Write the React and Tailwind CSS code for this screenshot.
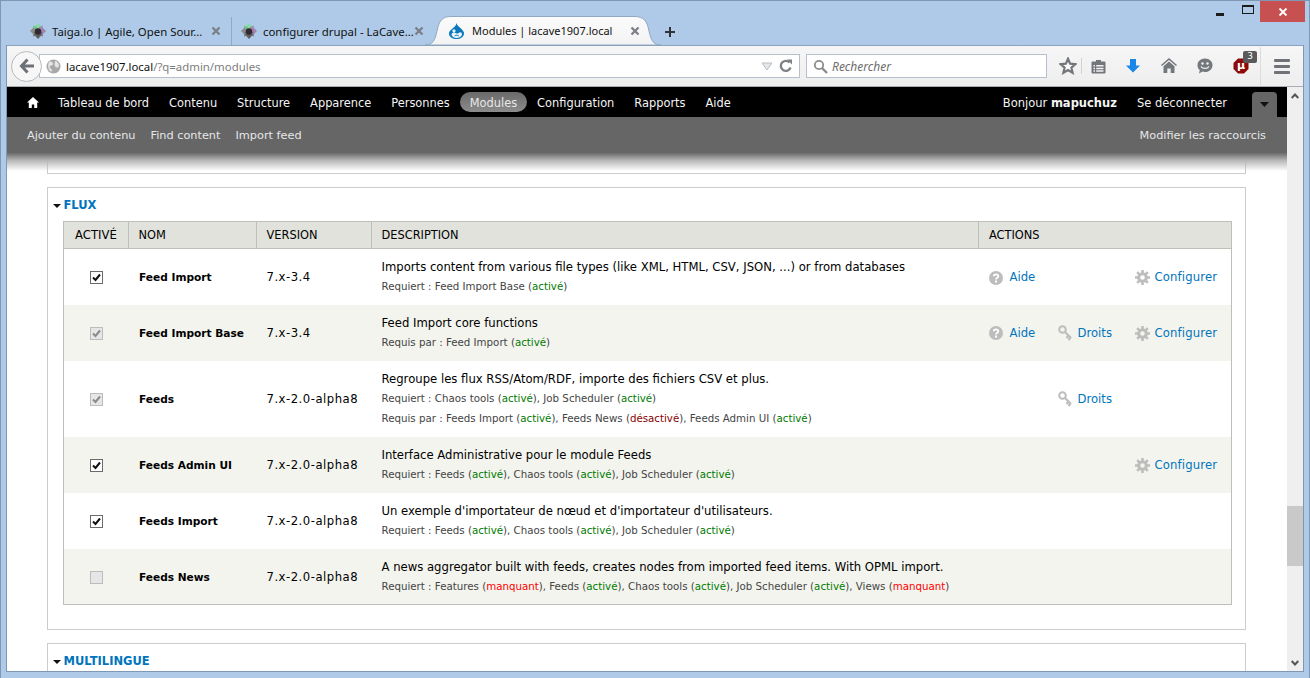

import React from "react";

const dj = "font-['DejaVu_Sans',sans-serif]";
const ui = "font-['Noto_Sans',sans-serif]";

function Taiga() {
  return (
    <svg width="16" height="16" viewBox="0 0 16 16" className="shrink-0">
      <path d="M8 0 11.500 3.500 8 8 4.500 3.500Z" fill="#86dca8" />
      <path d="M3 2.500 7 4 8 8 4 7Z" fill="#6fc383" />
      <path d="M13 2.500 9 4 8 8 12 7Z" fill="#9c8db0" />
      <path d="M16 8 12.500 4.500 8 8 12.500 11.500Z" fill="#a282aa" />
      <path d="M0 8 3.500 4.500 8 8 3.500 11.500Z" fill="#8b8b8b" />
      <path d="M3 13.500 7 12 8 8 4 9Z" fill="#6c6c6c" />
      <path d="M13 13.500 9 12 8 8 12 9Z" fill="#7c6487" />
      <path d="M8 16 4.800 12.500 8 8 11.200 12.500Z" fill="#5f5f5f" />
      <circle cx="8" cy="8.500" r="3.200" fill="#2e2a33" />
    </svg>
  );
}

function Drop() {
  return (
    <svg width="15" height="16" viewBox="0 0 15 16" className="shrink-0">
      <path d="M7.500 0C8 2.500 10 3.500 12 5.500 14 7.500 15 9 15 10.500 15 14 11.500 16 7.500 16S0 14 0 10.500C0 8.500 1.500 7 3.500 5.500 5.500 4 7 2.500 7.500 0Z" fill="#0a78bd" />
      <path d="M2.500 11.500C3 9.500 5 9 6.500 10 8 11 9.500 10.500 10.500 9.500 11.800 8.800 13 9.800 13 11.500 12.500 13.500 10.500 15 7.500 15S3 13.500 2.500 11.500Z" fill="#e8f2f9" />
      <circle cx="5" cy="7.800" r="1.600" fill="#e8f2f9" />
      <path d="M5.500 13C7 12 8.500 12 9.800 13" stroke="#0a78bd" strokeWidth="1" fill="none" />
    </svg>
  );
}

function Close() {
  return (
    <svg width="10" height="10" viewBox="0 0 10 10" className="shrink-0">
      <path d="M1.500 1.500 8.500 8.500M8.500 1.500 1.500 8.500" stroke="#7b7f86" strokeWidth="2.300" />
    </svg>
  );
}

function InactiveTab({ w, title, border }) {
  return (
    <div className={`flex h-[28px] items-center pr-[10px] ${w} ${border}`}>
      <Taiga />
      <span className={`${ui} ml-[6px] flex-1 whitespace-nowrap pt-[2px] text-[11.4px] text-[#111]`}>{title}</span>
      <Close />
    </div>
  );
}

function ActiveTab() {
  return (
    <div className="relative -ml-[3px] flex h-[29px] w-[236px] items-center pl-[24px] pr-[21px]">
      <svg width="236" height="29" viewBox="0 0 236 29" className="absolute left-0 top-0">
        <defs>
          <linearGradient id="tabfill" x1="0" y1="0" x2="0" y2="1">
            <stop offset="0" stopColor="#fbfbfb" />
            <stop offset="1" stopColor="#f3f3f3" />
          </linearGradient>
        </defs>
        <path d="M0 29C8 29 10 24 12 15 14 5 17 .5 26 .5H209C219 .5 222 5 224 15 226 24 228 29 236 29Z" fill="url(#tabfill)" stroke="#8fa8c4" strokeWidth="1" />
      </svg>
      <span className="relative"><Drop /></span>
      <span className={`${ui} relative ml-[8px] flex-1 whitespace-nowrap pt-[2px] text-[11px] text-[#111]`}>Modules | lacave1907.local</span>
      <span className="relative"><Close /></span>
    </div>
  );
}

function WindowControls() {
  return (
    <div className="absolute right-[4px] top-0 flex h-[21px] items-stretch">
      <div className="flex w-[32px] items-center justify-center"><span className="mt-[6px] h-[3px] w-[8px] bg-[#1c1c1c]" /></div>
      <div className="flex w-[24px] items-center justify-center"><span className="-mt-[5px] h-[9px] w-[12px] border border-t-2 border-[#1c1c1c]" /></div>
      <div className="flex w-[45px] items-center justify-center bg-[#c75050]">
        <svg width="10" height="10" viewBox="0 0 10 10"><path d="M1.500 1.500 8.500 8.500M8.500 1.500 1.500 8.500" stroke="#fff" strokeWidth="1.800" /></svg>
      </div>
    </div>
  );
}

function BackButton() {
  return (
    <div className="z-10 flex h-[31px] w-[31px] shrink-0 items-center justify-center rounded-full border border-[#b6babf] bg-[#f7f7f7]">
      <svg width="16" height="16" viewBox="0 0 16 16">
        <path d="M8.500 1.500 2.500 8 8.500 14.500M3 8H15" fill="none" stroke="#6c7176" strokeWidth="3" />
      </svg>
    </div>
  );
}

function Toolbar() {
  return (
    <div className="flex h-[42px] shrink-0 items-center border-y border-t-[#8ca3bc] border-b-[#a9adb1] bg-linear-to-b from-[#f6f6f6] to-[#eeeeee] pl-[4px]">
      <BackButton />
      <div className="-ml-[3px] flex h-[24px] w-[761px] items-center border border-[#b6c0cb] bg-white pl-[6px] pr-[6px]">
        <svg width="15" height="15" viewBox="0 0 15 15" className="shrink-0">
          <circle cx="7.500" cy="7.500" r="7" fill="#a8a8a8" />
          <path d="M3 3C5 2 7 3 7 5S5 6 4 7 5 10 6 11 5 13 4 12 1 7 3 3ZM9 2C11 2 13 4 13 7 12 9 10 9 9 7S9 5 9 2Z" fill="#e4e4e4" />
        </svg>
        <span className={`${ui} ml-[5px] flex-1 pt-[2px] text-[11.4px]`}>
          <span className="text-[#111]">lacave1907.local</span>
          <span className="text-[#7c7c7c]">/?q=admin/modules</span>
        </span>
        <svg width="12" height="9" viewBox="0 0 12 9" className="mr-[6px]"><path d="M1 1H11L6 8Z" fill="#e4e7ea" stroke="#b9bec3" /></svg>
        <svg width="14" height="14" viewBox="0 0 14 14">
          <path d="M11.500 8.500A5 5 0 1 1 10.500 3.500" fill="none" stroke="#7d8287" strokeWidth="2.400" />
          <path d="M8 .5H13V5.500Z" fill="#7d8287" />
        </svg>
      </div>
      <div className="ml-[6px] flex h-[24px] w-[241px] items-center border border-[#b6c0cb] bg-white pl-[6px]">
        <svg width="15" height="15" viewBox="0 0 15 15">
          <circle cx="6" cy="6" r="4.200" fill="none" stroke="#8b8b8b" strokeWidth="1.800" />
          <path d="M9 9 14 14" stroke="#8b8b8b" strokeWidth="2.400" />
        </svg>
        <span className={`${ui} ml-[4px] pt-[2px] text-[12px] italic text-[#6d6d6d]`}>Rechercher</span>
      </div>
      <div className="ml-[12px] flex items-center">
        <svg width="18" height="18" viewBox="0 0 18 18">
          <path d="M9 1.800 11.100 6.700 16.300 7.200 12.400 10.600 13.600 15.800 9 13.100 4.400 15.800 5.600 10.600 1.700 7.200 6.900 6.700Z" fill="#fafafa" stroke="#72767b" strokeWidth="2.200" />
        </svg>
        <span className="ml-[4px] h-[16px] w-px bg-[#d2d2d2]" />
        <svg width="15" height="15" viewBox="0 0 15 15" className="ml-[9px]">
          <path d="M1.500 2.500H5V1H10V2.500H13.500A1 1 0 0 1 14.500 3.500V13.500A1 1 0 0 1 13.500 14.500H1.500A1 1 0 0 1 .5 13.500V3.500A1 1 0 0 1 1.500 2.500Z" fill="#72767b" />
          <path d="M2.500 6H4V7.500H2.500ZM2.500 8.800H4V10.300H2.500ZM2.500 11.300H4V12.800H2.500ZM5.200 6H12.500V7.500H5.200ZM5.200 8.800H12.500V10.300H5.200ZM5.200 11.300H12.500V12.800H5.200Z" fill="#f2f2f2" />
        </svg>
        <svg width="16" height="16" viewBox="0 0 16 16" className="ml-[19px]">
          <path d="M5 1H11V7.500H15L8 14.500 1 7.500H5Z" fill="#1a86e8" />
        </svg>
        <svg width="16" height="16" viewBox="0 0 16 16" className="ml-[20px]">
          <path d="M8 0 0 7 1 8 8 2 15 8 16 7Z" fill="#74787d" />
          <path d="M8 3.500 2.500 8.200V15H6.300V10.500H9.700V15H13.500V8.200Z" fill="#74787d" />
        </svg>
        <svg width="16" height="16" viewBox="0 0 16 16" className="ml-[20px]">
          <path d="M8 .5C12.500 .5 15.500 3.500 15.500 7.200S12.500 14 8 14C7 14 6 13.800 5.500 13.600L2 15.500 2.800 12C1.300 11 .5 9.200 .5 7.200.5 3.500 3.500 .5 8 .5Z" fill="#74787d" />
          <circle cx="5.500" cy="5.500" r="1.200" fill="#f2f2f2" />
          <circle cx="10.500" cy="5.500" r="1.200" fill="#f2f2f2" />
          <path d="M4 8.500C5.500 11 10.500 11 12 8.500" fill="none" stroke="#f2f2f2" strokeWidth="1.300" />
        </svg>
        <div className="relative ml-[20px] h-[16px] w-[16px]">
          <svg width="16" height="16" viewBox="0 0 16 16">
            <path d="M5 .5H11L15.500 5V11L11 15.500H5L.5 11V5Z" fill="#8c0a0a" />
          </svg>
          <span className={`${dj} absolute left-[4px] top-[0px] text-[11px] font-bold leading-[16px] text-white`}>μ</span>
          <span className={`${dj} absolute -top-[7px] left-[10px] flex h-[12px] w-[14px] items-center justify-center rounded-[2px] bg-[#5a5a5a] text-[9px] text-white`}>3</span>
        </div>
        <span className="ml-[11px] h-[38px] w-px bg-[#dcdcdc]" />
        <div className="ml-[13px] flex flex-col gap-[3px]">
          <span className="h-[3px] w-[16px] rounded-[1px] bg-[#6f7378]" />
          <span className="h-[3px] w-[16px] rounded-[1px] bg-[#6f7378]" />
          <span className="h-[3px] w-[16px] rounded-[1px] bg-[#6f7378]" />
        </div>
      </div>
    </div>
  );
}

function AdminBar() {
  const items = [
    ["Tableau de bord", false],
    ["Contenu", false],
    ["Structure", false],
    ["Apparence", false],
    ["Personnes", false],
    ["Modules", true],
    ["Configuration", false],
    ["Rapports", false],
    ["Aide", false],
  ];
  return (
    <div className={`${dj} shrink-0 text-[#f4f4f4]`}>
      <div className="flex h-[30px] items-center bg-black pl-[20px] text-[11.4px]">
        <svg width="12" height="11" viewBox="0 0 12 11" className="mr-[19px] shrink-0">
          <path d="M6 0 0 5.500H1.800V11H4.800V7.500H7.200V11H10.200V5.500H12Z" fill="#fff" />
        </svg>
        <div className="flex items-center gap-[20px]">
          {items.map(([t, a]) =>
            a ? (
              <span key={t} className="-mx-[10px] flex h-[20px] items-center rounded-[10px] bg-linear-to-b from-[#6a6a6a] to-[#8c8c8c] px-[10px] pt-[3px] text-[#e8e8e8]">{t}</span>
            ) : (
              <span key={t} className="whitespace-nowrap pt-[4px]">{t}</span>
            )
          )}
        </div>
        <div className="ml-auto flex h-full items-center text-[11.5px]">
          <span className="pt-[4px]">Bonjour <b>mapuchuz</b></span>
          <span className="ml-[20px] pt-[4px]">Se déconnecter</span>
          <div className="ml-[25px] mr-[10px] flex h-[25px] w-[25px] items-center justify-center self-end rounded-t-[4px] bg-[#666]">
            <svg width="9" height="5" viewBox="0 0 9 5"><path d="M0 0H9L4.500 5Z" fill="#111" /></svg>
          </div>
        </div>
      </div>
      <div className="flex h-[36px] items-center gap-[15px] bg-[#666] pl-[20px] pr-[21px] pt-[2px] text-[11.3px] text-[#e6e6e6]">
        <span>Ajouter du contenu</span>
        <span>Find content</span>
        <span>Import feed</span>
        <span className="ml-auto">Modifier les raccourcis</span>
      </div>
    </div>
  );
}

const A = () => <span className="text-[#007a00]">activé</span>;
const M = () => <span className="text-[#ff0000]">manquant</span>;
const D = () => <span className="text-[#880000]">désactivé</span>;

function Check({ state }) {
  if (state === "on")
    return (
      <span className="inline-flex h-[13px] w-[13px] items-center justify-center border border-[#6a6a6a] bg-white align-middle">
        <svg width="9" height="9" viewBox="0 0 9 9"><path d="M1 4.500 3.500 7 8 1.500" fill="none" stroke="#111" strokeWidth="2" /></svg>
      </span>
    );
  if (state === "dis")
    return (
      <span className="inline-flex h-[13px] w-[13px] items-center justify-center border border-[#bcbcbc] bg-[#e6e6e6] align-middle">
        <svg width="9" height="9" viewBox="0 0 9 9"><path d="M1 4.500 3.500 7 8 1.500" fill="none" stroke="#8a8a8a" strokeWidth="2" /></svg>
      </span>
    );
  return <span className="inline-block h-[13px] w-[13px] border border-[#bcbcbc] bg-[#e6e6e6] align-middle" />;
}

function QIcon() {
  return (
    <svg width="14" height="14" viewBox="0 0 14 14" className="shrink-0">
      <circle cx="7" cy="7" r="7" fill="#bdbdbd" />
      <path d="M4.800 5.300C4.800 2.800 9.300 2.800 9.300 5.200 9.300 6.800 7 6.800 7 8.500" fill="none" stroke="#fff" strokeWidth="1.800" />
      <rect x="6" y="9.500" width="2" height="2" fill="#fff" />
    </svg>
  );
}
function KeyIcon() {
  return (
    <svg width="15" height="16" viewBox="0 0 15 16" className="shrink-0">
      <circle cx="4.500" cy="4.500" r="3.300" fill="none" stroke="#bdbdbd" strokeWidth="2" />
      <path d="M7 7 13 13M10.500 10.500 8.500 13M12.500 12.500 10.500 15" fill="none" stroke="#bdbdbd" strokeWidth="2.200" />
    </svg>
  );
}
function GearIcon() {
  return (
    <svg width="15" height="15" viewBox="0 0 15 15" className="shrink-0">
      <circle cx="7.500" cy="7.500" r="3.800" fill="none" stroke="#bdbdbd" strokeWidth="3" />
      <g stroke="#bdbdbd" strokeWidth="2.600">
        <path d="M7.500 0V3M7.500 12V15M0 7.500H3M12 7.500H15M2.200 2.200 4.300 4.300M10.700 10.700 12.800 12.800M12.800 2.200 10.700 4.300M4.300 10.700 2.200 12.800" />
      </g>
    </svg>
  );
}

function Actions({ a, d, c }) {
  return (
    <div className="grid grid-cols-[69px_77px_1fr] items-center text-[#0074bd]">
      <span>{a && <span className="flex items-center gap-[7px]"><QIcon />Aide</span>}</span>
      <span>{d && <span className="flex items-center gap-[5px]"><KeyIcon />Droits</span>}</span>
      <span>{c && <span className="flex items-center gap-[5px] tracking-[0.15px]"><GearIcon />Configurer</span>}</span>
    </div>
  );
}

const rows = [
  {
    chk: "on", name: "Feed Import", ver: "7.x-3.4", h: "h-[56px]",
    desc: "Imports content from various file types (like XML, HTML, CSV, JSON, ...) or from databases",
    sub: [<>Requiert : Feed Import Base (<A />)</>],
    a: true, c: true,
  },
  {
    chk: "dis", name: "Feed Import Base", ver: "7.x-3.4", h: "h-[56px]",
    desc: "Feed Import core functions",
    sub: [<>Requis par : Feed Import (<A />)</>],
    a: true, d: true, c: true,
  },
  {
    chk: "dis", name: "Feeds", ver: "7.x-2.0-alpha8", h: "h-[76px]",
    desc: "Regroupe les flux RSS/Atom/RDF, importe des fichiers CSV et plus.",
    sub: [
      <>Requiert : Chaos tools (<A />), Job Scheduler (<A />)</>,
      <>Requis par : Feeds Import (<A />), Feeds News (<D />), Feeds Admin UI (<A />)</>,
    ],
    d: true,
  },
  {
    chk: "on", name: "Feeds Admin UI", ver: "7.x-2.0-alpha8", h: "h-[56px]",
    desc: "Interface Administrative pour le module Feeds",
    sub: [<>Requiert : Feeds (<A />), Chaos tools (<A />), Job Scheduler (<A />)</>],
    c: true,
  },
  {
    chk: "on", name: "Feeds Import", ver: "7.x-2.0-alpha8", h: "h-[56px]",
    desc: "Un exemple d'importateur de nœud et d'importateur d'utilisateurs.",
    sub: [<>Requiert : Feeds (<A />), Chaos tools (<A />), Job Scheduler (<A />)</>],
  },
  {
    chk: "off", name: "Feeds News", ver: "7.x-2.0-alpha8", h: "h-[56px]",
    desc: "A news aggregator built with feeds, creates nodes from imported feed items. With OPML import.",
    sub: [<>Requiert : Features (<M />), Feeds (<A />), Chaos tools (<A />), Job Scheduler (<A />), Views (<M />)</>],
  },
];

function ModuleTable() {
  const th = "border-r border-[#bebfb9] pl-[9.5px] pt-[2px] text-left text-[11.4px] font-normal";
  return (
    <table className="w-[1169px] table-fixed border-collapse border border-[#bebfb9] text-[11.65px] text-black">
      <colgroup>
        <col className="w-[65px]" />
        <col className="w-[128px]" />
        <col className="w-[115px]" />
        <col className="w-[607px]" />
        <col />
      </colgroup>
      <thead>
        <tr className="h-[27px] border-b border-[#bebfb9] bg-[#e1e2dc]">
          <th className="border-r border-[#bebfb9] pl-[11px] pt-[2px] text-left font-normal">ACTIVÉ</th>
          <th className={th}>NOM</th>
          <th className={th}>VERSION</th>
          <th className={th}>DESCRIPTION</th>
          <th className="pl-[10px] pt-[2px] text-left text-[11.4px] font-normal">ACTIONS</th>
        </tr>
      </thead>
      <tbody>
        {rows.map((r, i) => (
          <tr key={r.name} className={`${r.h} ${i % 2 ? "bg-[#f3f4ee]" : "bg-white"}`}>
            <td className="pt-[2px] text-center"><Check state={r.chk} /></td>
            <td className="whitespace-nowrap pl-[10.5px] pt-[3px] text-[10.6px] font-bold">{r.name}</td>
            <td className="whitespace-nowrap pl-[10px] pt-[2px] tracking-[0.5px]">{r.ver}</td>
            <td className="px-[10px] pt-[2px]">
              <div className="-mt-[2px] leading-[18px]">{r.desc}</div>
              {r.sub.map((s, j) => (
                <div key={j} className={`text-[10.25px] leading-[18px] text-[#444] ${j === 0 ? "mt-[1px]" : "mt-[2px]"}`}>{s}</div>
              ))}
            </td>
            <td className="pl-[10px] pr-[13px] pt-[2px]">
              <Actions a={r.a} d={r.d} c={r.c} />
            </td>
          </tr>
        ))}
      </tbody>
    </table>
  );
}

function Legend({ children }) {
  return (
    <div className="flex h-[33px] items-center gap-[2.500px] pl-[5px] pt-[2px]">
      <svg width="8" height="4" viewBox="0 0 8 4"><path d="M0 0H8L4 4Z" fill="#111" /></svg>
      <span className="text-[11.5px] font-bold text-[#0074bd]">{children}</span>
    </div>
  );
}

function Scrollbar() {
  return (
    <div className="flex w-[16px] shrink-0 flex-col items-center bg-[#efefef]">
      <svg width="8" height="6" viewBox="0 0 8 6" className="mt-[6px]"><path d="M.7 5 4 1.500 7.300 5" fill="none" stroke="#555" strokeWidth="2" /></svg>
      <div className="mt-[407px] h-[60px] w-full bg-[#c9c9c9]" />
      <svg width="8" height="6" viewBox="0 0 8 6" className="mt-[94px]"><path d="M.7 1 4 4.500 7.300 1" fill="none" stroke="#555" strokeWidth="2" /></svg>
    </div>
  );
}

function Content() {
  return (
    <div className={`${dj} relative min-h-0 flex-1 overflow-hidden bg-white px-[40px]`}>
      <div className="h-[21px] w-[1199px] border-x border-b border-[#cccccc]" />
      <div className="mt-[13px] h-[443px] w-[1199px] border border-[#cccccc]">
        <Legend>FLUX</Legend>
        <div className="pl-[15px]"><ModuleTable /></div>
      </div>
      <div className="mt-[13px] h-[60px] w-[1199px] border border-[#cccccc]">
        <Legend>MULTILINGUE</Legend>
      </div>
      <div className="absolute inset-x-0 top-0 h-[18px] bg-linear-to-b from-[#6c6c6c] via-[#b5b5b5] via-40% to-transparent" />
    </div>
  );
}

export default function App() {
  return (
    <div className="relative flex h-[678px] w-[1310px] flex-col overflow-hidden border border-b-0 border-[#7f97b3] bg-[#aecae8] pb-[6px] pl-[5px] pr-[5px]">
      <WindowControls />
      <div className="flex h-[44px] shrink-0 items-end pl-[24px]">
        <InactiveTab w="w-[202px]" title="Taiga.lo | Agile, Open Sour..." border="border-r border-[#8fa8c4]" />
        <InactiveTab w="w-[196px] pl-[9px]" title="configurer drupal - LaCave..." border="" />
        <ActiveTab />
        <svg width="12" height="12" viewBox="0 0 12 12" className="mb-[7px] ml-[3px]"><path d="M6 1V11M1 6H11" stroke="#2f3338" strokeWidth="2" /></svg>
      </div>
      <div className="flex min-h-0 flex-1 flex-col border-x border-b border-[#7f97b3]">
        <Toolbar />
        <div className="flex min-h-0 flex-1">
          <div className="flex min-w-0 flex-1 flex-col">
            <AdminBar />
            <Content />
          </div>
          <Scrollbar />
        </div>
      </div>
    </div>
  );
}
